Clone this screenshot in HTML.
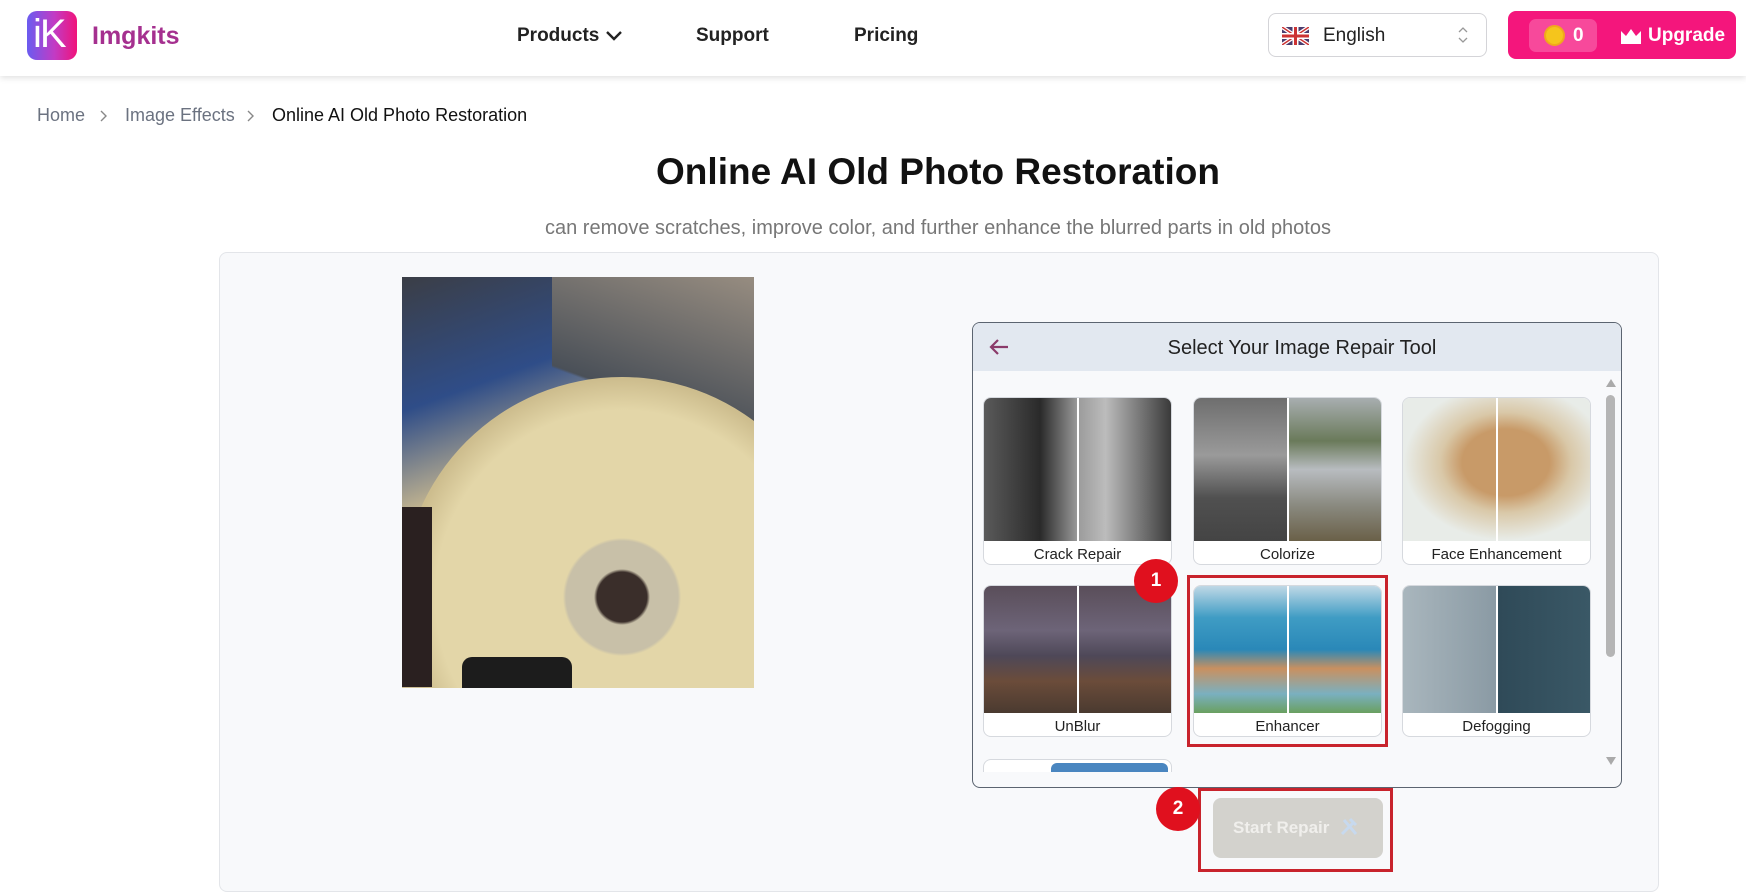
<!DOCTYPE html>
<html><head><meta charset="utf-8">
<style>
*{margin:0;padding:0;box-sizing:border-box}
body{width:1746px;height:874px;overflow:hidden;background:#fff;font-family:"Liberation Sans",sans-serif;position:relative;color:#111}
.a{position:absolute}
.hdr{left:0;top:0;width:1746px;height:76px;background:#fff;box-shadow:0 2px 6px rgba(0,0,0,.12)}
.nav{font-size:19px;font-weight:bold;color:#222;top:25px}
.card{position:absolute;width:189px;height:168px;border:1px solid #d6d9de;border-radius:8px;background:#fff;overflow:hidden}
.card .im{position:absolute;left:0;top:0;width:100%;height:143px}
.card .dv{position:absolute;left:50%;top:0;width:2px;height:143px;background:#fff;margin-left:-1px}
.card .lb{position:absolute;left:0;right:0;bottom:0;height:25px;text-align:center;font-size:15px;line-height:24px;color:#222;padding-top:4px}
.r2{height:152px}.r2 .im,.r2 .dv{height:127px}
.circ{width:44px;height:44px;border-radius:50%;background:#e0101e;color:#fff;font-weight:bold;font-size:19px;text-align:center;line-height:44px}
</style></head><body>
<div class="a hdr"></div>
<div class="a" style="left:27px;top:11px;width:50px;height:49px;border-radius:10px;background:linear-gradient(90deg,#6a5cf0,#c23bc4 55%,#f0137a)"></div>
<div class="a" style="left:33px;top:12px;color:#fff;font-size:40px;font-weight:300;letter-spacing:-2px">iK</div>
<div class="a" style="left:92px;top:22px;font-size:25px;font-weight:bold;color:#a5308f">Imgkits</div>
<div class="a nav" style="left:517px">Products</div>
<svg class="a" style="left:605px;top:29px" width="18" height="14"><path d="M2 3l7 7 7-7" stroke="#222" stroke-width="2.4" fill="none"/></svg>
<div class="a nav" style="left:696px">Support</div>
<div class="a nav" style="left:854px">Pricing</div>
<div class="a" style="left:1268px;top:13px;width:219px;height:44px;border:1px solid #d4d4d8;border-radius:8px;background:#fff"></div>
<svg class="a" style="left:1282px;top:27px" width="27" height="18"><rect width="27" height="18" fill="#4a3c6e"/><path d="M0 0L27 18M27 0L0 18" stroke="#fff" stroke-width="4"/><path d="M0 0L27 18M27 0L0 18" stroke="#c33" stroke-width="1.5"/><path d="M13.5 0V18M0 9H27" stroke="#fff" stroke-width="6"/><path d="M13.5 0V18M0 9H27" stroke="#c33" stroke-width="3"/></svg>
<div class="a" style="left:1323px;top:25px;font-size:19px;color:#222">English</div>
<svg class="a" style="left:1457px;top:25px" width="12" height="20"><path d="M2 7l4-4 4 4M2 13l4 4 4-4" stroke="#999" stroke-width="1.3" fill="none"/></svg>
<div class="a" style="left:1508px;top:11px;width:228px;height:48px;border-radius:8px;background:#f4167c"></div>
<div class="a" style="left:1529px;top:19px;width:68px;height:33px;border-radius:7px;background:#f7499b"></div>
<div class="a" style="left:1544px;top:25px;width:21px;height:21px;border-radius:50%;background:#f5c51c;border:2px solid #f0a91c"></div>
<div class="a" style="left:1573px;top:25px;color:#fff;font-weight:bold;font-size:19px">0</div>
<svg class="a" style="left:1620px;top:28px" width="22" height="17"><path d="M1 3l5 5 5-7 5 7 5-5v13H1z" fill="#fff"/></svg>
<div class="a" style="left:1648px;top:25px;color:#fff;font-weight:bold;font-size:19px">Upgrade</div>

<div class="a" style="left:37px;top:105px;font-size:18px;color:#6b7280">Home</div>
<svg class="a" style="left:99px;top:109px" width="10" height="14"><path d="M2 2l5 5-5 5" stroke="#888" stroke-width="1.4" fill="none"/></svg>
<div class="a" style="left:125px;top:105px;font-size:18px;color:#6b7280">Image Effects</div>
<svg class="a" style="left:246px;top:109px" width="10" height="14"><path d="M2 2l5 5-5 5" stroke="#888" stroke-width="1.4" fill="none"/></svg>
<div class="a" style="left:272px;top:105px;font-size:18px;color:#111">Online AI Old Photo Restoration</div>

<div class="a" style="left:0;width:1876px;top:151px;text-align:center;font-size:37px;font-weight:bold;color:#111">Online AI Old Photo Restoration</div>
<div class="a" style="left:0;width:1876px;top:217px;text-align:center;font-size:20px;color:#777">can remove scratches, improve color, and further enhance the blurred parts in old photos</div>

<div class="a" style="left:219px;top:252px;width:1440px;height:640px;background:#f8f9fb;border:1px solid #e3e5e9;border-radius:8px"></div>

<div class="a" style="left:402px;top:277px;width:352px;height:411px;overflow:hidden;background:linear-gradient(160deg,#3b3e46 0%,#2f4d88 25%,#c8b890 45%,#d8c9a0 70%,#a89870 100%)">
 <div class="a" style="left:150px;top:0;width:220px;height:200px;background:linear-gradient(200deg,#9a8f82,#4a5058 60%,transparent 61%)"></div>
 <div class="a" style="left:0px;top:100px;width:440px;height:440px;border-radius:50%;background:radial-gradient(circle,#3a2e2a 0 8%,#c8c0a8 9% 18%,#e3d6a8 19% 60%,#cdbd8e 70%)"></div>
 <div class="a" style="left:0;top:230px;width:30px;height:180px;background:#2a2020"></div>
 <div class="a" style="left:60px;top:380px;width:110px;height:40px;border-radius:10px;background:#1c1c1c"></div>
</div>

<div class="a" style="left:972px;top:322px;width:650px;height:466px;border:1px solid #5b6470;border-radius:8px;background:#f8f9fb;overflow:hidden">
 <div class="a" style="left:0;top:0;width:648px;height:48px;background:#e2e8f0"></div>
 <svg class="a" style="left:14px;top:14px" width="24" height="20"><path d="M21 10H4M11 3L4 10l7 7" stroke="#8a3a6a" stroke-width="2.2" fill="none"/></svg>
 <div class="a" style="left:0;width:648px;top:14px;text-align:center;font-size:20px;color:#222;padding-left:10px">Select Your Image Repair Tool</div>
 <svg class="a" style="left:632px;top:54px" width="12" height="12"><path d="M1 10L6 2l5 8z" fill="#aaa"/></svg>
 <div class="a" style="left:633px;top:72px;width:9px;height:262px;border-radius:5px;background:#b5b5b5"></div>
 <svg class="a" style="left:632px;top:432px" width="12" height="12"><path d="M1 2L6 10l5-8z" fill="#aaa"/></svg>
</div>

<div class="card" style="left:983px;top:397px"><div class="im" style="background:linear-gradient(90deg,#5a5a5a,#2a2a2a 30%,#9a9a9a 50%,#bcbcbc 65%,#3a3a3a)"></div><div class="dv"></div><div class="lb">Crack Repair</div></div>
<div class="card" style="left:1193px;top:397px"><div class="im" style="width:50%;background:linear-gradient(180deg,#6e6e6e,#9a9a9a 40%,#505050 70%,#444)"></div><div class="im" style="left:50%;width:50%;background:linear-gradient(180deg,#a8aeb0,#6a7a5a 30%,#b8bcc0 50%,#8a8a80 75%,#6a6048)"></div><div class="dv"></div><div class="lb">Colorize</div></div>
<div class="card" style="left:1402px;top:397px"><div class="im" style="background:radial-gradient(ellipse at 55% 45%,#c89a68 0 30%,#d9c8a8 45%,#e8ece8 70%)"></div><div class="dv"></div><div class="lb">Face Enhancement</div></div>
<div class="card r2" style="left:983px;top:585px"><div class="im" style="background:linear-gradient(180deg,#5a4e5a,#6d6478 35%,#4e4858 55%,#6b4c3a 75%,#4a3a30)"></div><div class="dv"></div><div class="lb">UnBlur</div></div>
<div class="card r2" style="left:1193px;top:585px"><div class="im" style="background:linear-gradient(180deg,#bfd8e6,#3f9cc4 25%,#2a88b8 50%,#c99060 65%,#7ab0c0 85%,#6aa060)"></div><div class="dv"></div><div class="lb">Enhancer</div></div>
<div class="card r2" style="left:1402px;top:585px"><div class="im" style="background:linear-gradient(90deg,#a9b6bd,#8a9aa4 50%,#2f4a58 51%,#3a5866)"></div><div class="dv"></div><div class="lb">Defogging</div></div>
<div class="a" style="left:983px;top:759px;width:189px;height:13px;border:1px solid #d6d9de;border-bottom:none;border-radius:8px 8px 0 0;background:#fff"></div>
<div class="a" style="left:1051px;top:763px;width:117px;height:9px;border-radius:6px 6px 0 0;background:#4a86c0"></div>

<div class="a" style="left:1187px;top:575px;width:201px;height:172px;border:3px solid #c8232c"></div>
<div class="a circ" style="left:1134px;top:559px">1</div>

<div class="a" style="left:1213px;top:798px;width:170px;height:60px;border-radius:8px;background:#d3d2cd"></div>
<div class="a" style="left:1233px;top:818px;font-size:17px;color:#f0efec;font-weight:bold">Start Repair</div>
<svg class="a" style="left:1338px;top:816px" width="22" height="22"><path d="M4 18L16 6M12 3l6 6M6 4l12 14" stroke="#c7d9ee" stroke-width="3"/></svg>
<div class="a" style="left:1198px;top:788px;width:195px;height:84px;border:3px solid #c8232c"></div>
<div class="a circ" style="left:1156px;top:787px">2</div>
</body></html>
